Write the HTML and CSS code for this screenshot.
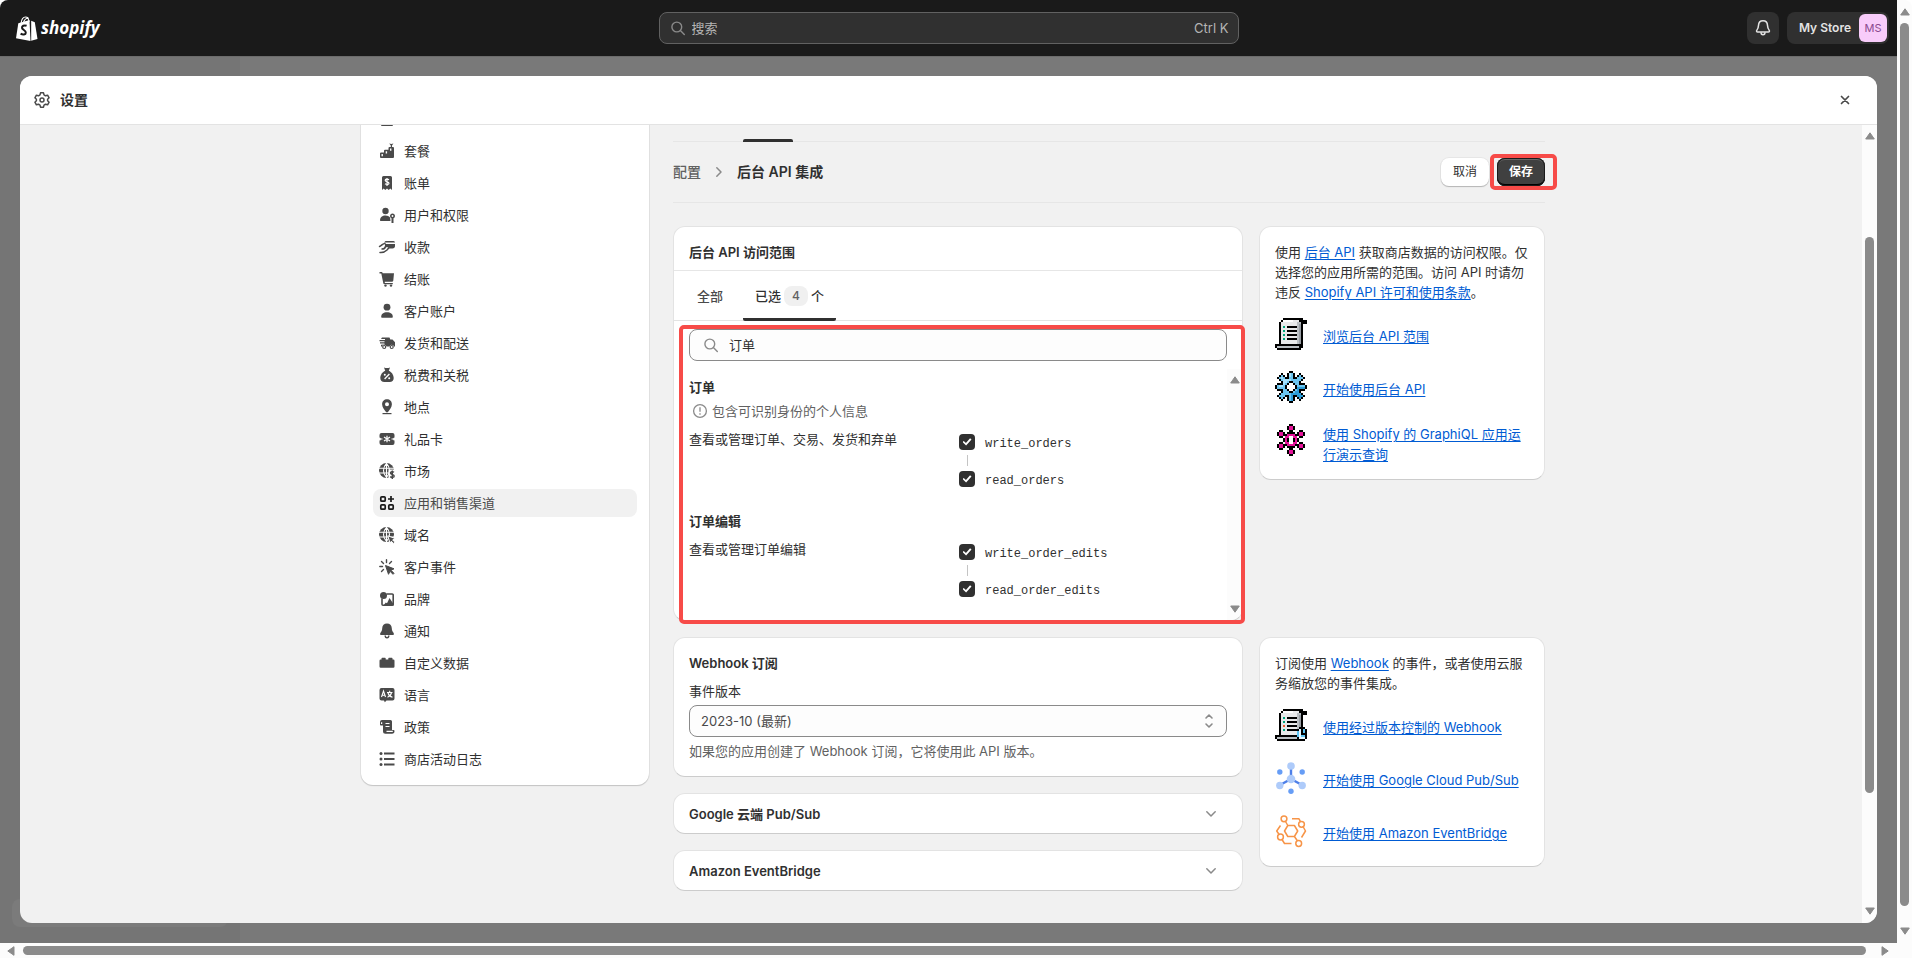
FILE: index.html
```html
<!DOCTYPE html>
<html lang="zh-CN">
<head>
<meta charset="utf-8">
<title>设置</title>
<link rel="stylesheet" href="styles.css">
</head>
<body>
<svg class="defs" aria-hidden="true">
  <symbol id="mag" viewBox="0 0 16 16"><path d="M11.7 7a4.9 4.9 0 1 1-9.8 0 4.9 4.9 0 0 1 9.8 0zM10.400 10.600l3.900 4" fill="none" stroke="currentColor" stroke-width="1.400" stroke-linecap="round"/></symbol>
  <symbol id="chev" viewBox="0 0 12 12"><path d="M1.800 3.800 6 8l4.200-4.200" fill="none" stroke="currentColor" stroke-width="1.500" stroke-linecap="round" stroke-linejoin="round"/></symbol>
  <symbol id="tri" viewBox="0 0 10 8"><path d="M5 .8 9.300 7H.7z" fill="#8b8b8b" stroke="#8b8b8b" stroke-linejoin="round"/></symbol>
  <symbol id="globe" viewBox="0 0 20 20"><circle cx="9.500" cy="9.500" r="7.500" fill="currentColor"/><path d="M2 7.300h15M2 12h15M9.500 2v15M9.500 2.400c-4 4-4 10 0 14M9.500 2.400c4 4 4 10 0 14" fill="none" stroke="#fff" stroke-width="1.100"/></symbol>
  <symbol id="scroll" viewBox="0 0 16 16">
    <path fill="#000" d="M4 0h10v1h2v2h-2v12h-1v1H1v-1H0v-2h2V2h1V1h1z"/>
    <path fill="#e8e9ea" d="M4 1h8v12H3V2h1z"/><path fill="#babfc3" d="M11 2h2v11h-2zM1 14h11v1H1z"/><path fill="#fff" d="M4 1h5v1H4z"/><path fill="#999ea4" d="M12 3h1v10h-1z"/>
    <path fill="#000" d="M6 4h5v1H6zM6 6h5v1H6zM6 8h5v1H6zM6 10h5v1H6z"/>
    <path fill="#00a57c" d="M4 4h1v1H4zM4 6h1v1H4zM4 8h1v1H4zM4 10h1v1H4z"/>
  </symbol>
</svg>

<div class="window">
  <div class="app">
    <header class="topbar">
      <a class="logo" href="#" aria-label="shopify">
        <svg width="22" height="25" viewBox="0 0 22 25"><path d="M2.300 7.200 13.500 4l1 21L0 22.300z" fill="#fff"/><path d="m15.200 4.800 3.600 1.500L21.500 23l-6.300 1.800z" fill="#fff"/><path d="M5 7.500C5.500 3.500 7.500 1 9.500 1c2.300 0 3.300 2 3.500 5M7.500 6.500C8.500 3 11 1.800 12.800 2.300" fill="none" stroke="#fff" stroke-width="1.200"/><path d="M10.600 9.800c-2.500-1-4.800.2-4.600 2 .2 2 4 2.500 3.800 4.800-.1 2.200-3 2.600-5.200 1.100" fill="none" stroke="#1a1a1a" stroke-width="2"/></svg>
        <span class="wordmark">shopify</span>
      </a>
      <div class="search">
        <svg width="16" height="16"><use href="#mag"/></svg>
        <input type="search" aria-label="搜索" placeholder="搜索">
        <kbd>Ctrl K</kbd>
      </div>
      <div class="account">
        <button class="bell" type="button" aria-label="通知">
          <svg width="20" height="20" viewBox="0 0 20 20" fill="none" stroke="#e3e3e3" stroke-width="1.500" stroke-linejoin="round"><path d="M10 2.800c-2.700 0-4.400 1.900-4.500 4.600-.1 2.300-.5 3.300-1.600 4.700-.7.900-.3 2 .8 2h10.600c1.100 0 1.500-1.100.8-2-1.100-1.400-1.500-2.400-1.600-4.700C14.400 4.700 12.700 2.800 10 2.800z"/><path d="M8 14.300c0 3.300 4 3.300 4 0"/></svg>
        </button>
        <button class="store" type="button"><span>My Store</span><span class="avatar">MS</span></button>
      </div>
    </header>

    <div class="backdrop">
      <span class="nav-item"></span>
      <div class="modal">
        <header class="modal-head">
          <svg width="20" height="20" viewBox="0 0 20 20" fill="none" stroke="#4a4a4a" stroke-width="1.500" stroke-linejoin="round"><path d="M8.500 2.800h3l.5 2.100 1.500.9 2.100-.6 1.500 2.600L15.600 9.200v1.600l1.500 1.400-1.500 2.600-2.100-.6-1.500.9-.5 2.100h-3L8 15.100l-1.500-.9-2.100.6-1.500-2.600 1.500-1.400V9.200L2.900 7.800l1.500-2.600 2.100.6L8 4.900z"/><circle cx="10" cy="10" r="2"/></svg>
          <h1>设置</h1>
          <button class="close" type="button" aria-label="关闭"><svg width="10" height="10" viewBox="0 0 10 10"><path d="m1.500 1.500 7 7m0-7-7 7" stroke="#4a4a4a" stroke-width="1.700" stroke-linecap="round"/></svg></button>
        </header>

        <div class="modal-body">
          <div class="page">
            <nav class="side">
              <a href="#" aria-label="商店详情"><svg viewBox="0 0 20 20"><path d="M4 9h12v7a1 1 0 0 1-1 1H5a1 1 0 0 1-1-1z"/></svg></a>
              <a href="#"><svg viewBox="0 0 20 20"><path d="M3 12.500a1 1 0 0 1 1-1h3V9.800a1 1 0 0 1 1-1h3.500V7a1 1 0 0 1 1-1H16a1 1 0 0 1 1 1v9a1 1 0 0 1-1 1H4a1 1 0 0 1-1-1z"/><path d="m12.200 2.500 2.100.5 2.100-.5-1.400 2v2h-1.200v-2z"/><path fill="#fff" d="M4.500 13h1.400v2.200H4.500zM8.700 10.300h1.400v2.200H8.700zM13 7.600h1.400v2.200H13z"/></svg>套餐</a>
              <a href="#"><svg viewBox="0 0 20 20"><path d="M5 4.500A1.500 1.500 0 0 1 6.500 3h7A1.500 1.500 0 0 1 15 4.500V17l-1.700-1.500L11.700 17 10 15.500 8.300 17l-1.600-1.500L5 17z"/><path d="M12 6.800c-1.500-1-3.800-.8-3.800.7 0 1.700 3.800.9 3.800 2.700 0 1.500-2.500 1.600-4 .6M10 5v8" fill="none" stroke="#fff" stroke-width="1.200"/></svg>账单</a>
              <a href="#"><svg viewBox="0 0 20 20"><circle cx="8.500" cy="6" r="3.200"/><path d="M3 15.500c0-3.200 2.300-5 5.500-5 2 0 3.600.7 4.600 2l.4 3.500H3.500z"/><path d="M15.500 8.500a2.500 2.500 0 0 1 1 4.800V18h-2v-4.700a2.500 2.500 0 0 1 1-4.800z"/><circle cx="15.500" cy="11" r=".9" fill="#fff"/></svg>用户和权限</a>
              <a href="#"><svg viewBox="0 0 20 20"><path d="M8.500 4h8a1.500 1.500 0 0 1 1.500 1.500H7zM8 7h10v2.500a2.500 2.500 0 0 1-2.500 2H12L13 9.500H8z"/><path d="M2.500 9.500C5 8.500 5.500 6.500 8 6.500M3 15.500c3.500.3 5-.5 7-2.500l3-3.500H8.500c-.5 2-2 2.600-3.500 2.600" fill="none" stroke="currentColor" stroke-width="1.500" stroke-linecap="round"/></svg>收款</a>
              <a href="#"><svg viewBox="0 0 20 20"><path d="M2.500 3h1.700c.8 0 1.400.5 1.500 1.200H17l-.7 7.300a1.400 1.400 0 0 1-1.400 1.200H7.800v1.200h8v1.300H7.500c-.8 0-1.400-.6-1.300-1.400L4.300 4.500H2.500z"/><circle cx="8.500" cy="16.600" r="1.200"/><circle cx="14" cy="16.600" r="1.200"/></svg>结账</a>
              <a href="#"><svg viewBox="0 0 20 20"><circle cx="10" cy="6.200" r="3.400"/><path d="M4.200 15.800c0-3 2.300-4.600 5.800-4.600s5.800 1.600 5.800 4.600c0 .7-.4 1-1 1H5.200c-.6 0-1-.3-1-1z"/></svg>客户账户</a>
              <a href="#"><svg viewBox="0 0 20 20"><path d="M5 4.500h7.500l.8 2h2.200L18 9.300v4.200h-1a2.300 2.300 0 0 0-4.500 0h-3a2.300 2.300 0 0 0-4.500 0H4v-1.700l3.500-.3v-1H3V9.300h4.500v-1h-5V7H8V6H4z"/><circle cx="7.200" cy="14" r="1.500" fill="#fff" stroke="currentColor" stroke-width="1.200"/><circle cx="14.700" cy="14" r="1.500" fill="#fff" stroke="currentColor" stroke-width="1.200"/></svg>发货和配送</a>
              <a href="#"><svg viewBox="0 0 20 20"><path d="M7 2.500 8.500 3h3l1.500-.5-1.200 3.200c2.700 1 4.900 4.200 4.900 7.300 0 2.700-1.700 4-4 4H7.300c-2.300 0-4-1.300-4-4 0-3.100 2.200-6.300 4.900-7.300z"/><path d="m7.600 14 4.800-5" stroke="#fff" stroke-width="1.300"/><circle cx="7.800" cy="9.800" r="1" fill="#fff"/><circle cx="12.200" cy="13.200" r="1" fill="#fff"/></svg>税费和关税</a>
              <a href="#"><svg viewBox="0 0 20 20"><path fill-rule="evenodd" d="M10 2.300c2.800 0 4.900 2.100 4.900 4.900 0 3-2.500 5.500-3.700 7.500-.6.900-1.800.9-2.400 0-1.200-2-3.700-4.500-3.700-7.500 0-2.800 2.100-4.900 4.900-4.900zm0 3a2 2 0 1 0 0 4 2 2 0 0 0 0-4z"/><path d="M5.500 16h9v1.200h-9z"/></svg>地点</a>
              <a href="#"><svg viewBox="0 0 20 20"><path d="M4.500 4h11a2 2 0 0 1 2 2v2.500a1.500 1.500 0 0 0 0 3V14a2 2 0 0 1-2 2h-11a2 2 0 0 1-2-2v-2.500a1.500 1.500 0 0 0 0-3V6a2 2 0 0 1 2-2z"/><path d="M10 6.800v6.400M7 8l6 4M13 8l-6 4M3.500 10h2M14.500 10h2" stroke="#fff" stroke-width="1.200"/></svg>礼品卡</a>
              <a href="#"><svg viewBox="0 0 20 20"><use href="#globe"/><path fill="#fff" d="M11.500 8.500H19V19h-7.500z"/><path d="M17 11.300c-1.300-1-3.600-.7-3.600.8 0 1.800 3.800 1 3.800 2.900 0 1.600-2.600 1.700-4 .6M15.300 9.500v8.500" fill="none" stroke="currentColor" stroke-width="1.400"/></svg>市场</a>
              <a class="on" href="#" aria-current="page"><svg viewBox="0 0 20 20" fill="none" stroke="#1a1a1a" stroke-width="1.700"><rect x="3.800" y="3.800" width="4.400" height="4.400" rx="1"/><rect x="3.800" y="11.800" width="4.400" height="4.400" rx="1"/><rect x="11.800" y="11.800" width="4.400" height="4.400" rx="1"/><path d="M14 3v6M11 6h6"/></svg>应用和销售渠道</a>
              <a href="#"><svg viewBox="0 0 20 20"><use href="#globe"/><path d="m10.800 10.800 7.400 2.700-2.600 1.400 2.200 2.200-1.300 1.300-2.200-2.200-1.200 2.100z" stroke="#fff" stroke-width="1"/></svg>域名</a>
              <a href="#"><svg viewBox="0 0 20 20"><path d="m8.500 8.500 8.500 3.300-3 1.500 3 3-1 1-3-3-1.500 3z" stroke="currentColor" stroke-linejoin="round"/><path d="M9.500 2.800v2.700M4.500 4.500l2 2M14.500 4.500l-2 2M2.800 9.500h2.700M4.500 14.500l2-2" fill="none" stroke="currentColor" stroke-width="1.400" stroke-linecap="round"/></svg>客户事件</a>
              <a href="#"><svg viewBox="0 0 20 20"><circle cx="6.500" cy="6.500" r="3.500"/><path d="M9.500 5h5.700a1 1 0 0 1 1 1v9.200a1 1 0 0 1-1 1H6a1 1 0 0 1-1-1V9.500" fill="none" stroke="currentColor" stroke-width="1.600"/><path d="m6.500 16.500 2.300-3 1.200.8L12.500 9l4.300 6.500v1z"/></svg>品牌</a>
              <a href="#"><svg viewBox="0 0 20 20"><path d="M10 2.500c-2.900 0-4.700 1.900-4.800 4.700-.1 2.200-.6 3-1.700 4.500-.9 1.200-.3 2.400 1 2.400h11c1.300 0 1.900-1.200 1-2.400-1.100-1.500-1.600-2.300-1.700-4.500-.1-2.800-1.900-4.700-4.800-4.700z"/><path d="M8.200 14.500c0 3 3.600 3 3.600 0" fill="none" stroke="currentColor" stroke-width="1.400"/></svg>通知</a>
              <a href="#"><svg viewBox="0 0 20 20"><path d="M4.500 6.500v-1a.7.7 0 0 1 .7-.7H8a.7.7 0 0 1 .7.7v1h2.600v-1a.7.7 0 0 1 .7-.7h2.800a.7.7 0 0 1 .7.700v1h.8a1.200 1.200 0 0 1 1.200 1.200v5.800a1.200 1.200 0 0 1-1.200 1.200H3.700a1.200 1.200 0 0 1-1.200-1.200V7.700a1.200 1.200 0 0 1 1.200-1.200z"/></svg>自定义数据</a>
              <a href="#"><svg viewBox="0 0 20 20"><path d="M4.500 3h11a2 2 0 0 1 2 2v8.500a2 2 0 0 1-2 2H9.500L7.800 17.300 7 15.500H4.500a2 2 0 0 1-2-2V5a2 2 0 0 1 2-2z"/><path d="m4.500 12 2-6 2 6M5.200 10.200h2.600M10 7.500h5.500M12.700 5.800v1.700M10.500 12.200c2.500-1 3.700-2.500 4-4.500M11 8c.5 2 2 3.500 4.500 4.200" fill="none" stroke="#fff" stroke-width="1.100"/></svg>语言</a>
              <a href="#"><svg viewBox="0 0 20 20"><path d="M5 3h8.500A1.500 1.500 0 0 1 15 4.500V13h1.500a1 1 0 0 1 1 1c0 1.700-.8 2.800-2.500 2.800H8.500A2.500 2.500 0 0 1 6 14.300V8.500H3.800a.8.800 0 0 1-.8-.8V5a2 2 0 0 1 2-2z"/><path d="M4.600 7V5.200M8.500 6.500h4M8.500 9.500h4M9.500 14.400h6.300" fill="none" stroke="#fff" stroke-width="1.200"/></svg>政策</a>
              <a href="#"><svg viewBox="0 0 20 20"><circle cx="4" cy="4.500" r="1.500"/><circle cx="4" cy="10" r="1.500"/><circle cx="4" cy="15.500" r="1.500"/><path d="M7 4.500h10.500M7 10h10.500M7 15.500h10.500" stroke="currentColor" stroke-width="1.800"/></svg>商店活动日志</a>
            </nav>

            <main class="content">
              <div class="strip"><span></span></div>
              <div class="crumbs">
                <a href="#">配置</a>
                <svg class="crumb-sep" width="12" height="12"><use href="#chev"/></svg>
                <h2>后台 API 集成</h2>
                <div class="actions">
                  <button class="btn" type="button">取消</button>
                  <span class="marked-save"><button class="btn primary" type="button">保存</button></span>
                </div>
              </div>

              <section class="section">
                <div class="card">
                  <h3 class="card-title">后台 API 访问范围</h3>
                  <div class="tabs" role="tablist">
                    <button type="button" role="tab">全部</button>
                    <button class="active" type="button" role="tab" aria-selected="true">已选<span class="badge">4</span>个</button>
                  </div>
                  <div class="scopes">
                    <div class="field">
                      <svg width="16" height="16"><use href="#mag"/></svg>
                      <input type="text" aria-label="搜索访问范围" value="订单">
                    </div>
                    <div class="scope-list">
                      <div class="scope-items">
                        <h4>订单</h4>
                        <p class="pii"><svg width="16" height="16" viewBox="0 0 16 16" fill="none" stroke="#8a8a8a" stroke-width="1.300"><circle cx="8" cy="8" r="6.400"/><path d="M8 4.200v4.600M8 10.300v1.500"/></svg>包含可识别身份的个人信息</p>
                        <div class="scope">
                          <p>查看或管理订单、交易、发货和弃单</p>
                          <div class="checks">
                            <label><input type="checkbox" checked><code>write_orders</code></label>
                            <i></i>
                            <label><input type="checkbox" checked><code>read_orders</code></label>
                          </div>
                        </div>
                        <h4 class="next">订单编辑</h4>
                        <div class="scope">
                          <p>查看或管理订单编辑</p>
                          <div class="checks">
                            <label><input type="checkbox" checked><code>write_order_edits</code></label>
                            <i></i>
                            <label><input type="checkbox" checked><code>read_order_edits</code></label>
                          </div>
                        </div>
                      </div>
                      <div class="bar inner" aria-hidden="true"><svg width="10" height="8"><use href="#tri"/></svg><svg class="down" width="10" height="8"><use href="#tri"/></svg></div>
                    </div>
                  </div>
                </div>

                <aside class="card help">
                  <p>使用 <a href="#">后台 API</a> 获取商店数据的访问权限。仅选择您的应用所需的范围。访问 API 时请勿违反 <a href="#">Shopify API 许可和使用条款</a>。</p>
                  <ul>
                    <li><svg class="pixel"><use href="#scroll"/></svg><a href="#">浏览后台 API 范围</a></li>
                    <li><svg class="pixel" viewBox="0 0 16 16">
                      <path stroke="#000" d="M7 .5h2M3 1.500h1M6 1.500h4M12 1.500h1M2 2.500h3M6 2.500h4M11 2.500h3M1 3.500h14M2 4.500h12M3 5.500h10M1 6.500h14M0 7.500h16M0 8.500h16M1 9.500h14M3 10.500h10M2 11.500h12M1 12.500h14M2 13.500h3M6 13.500h4M11 13.500h3M3 14.500h1M6 14.500h4M12 14.500h1M7 15.500h2"/>
                      <path stroke="#6cc5f0" d="M7 1.500h2M3 2.500h1M7 2.500h2M12 2.500h1M2 3.500h3M7 3.500h2M11 3.500h3M3 4.500h10M4 5.500h8M4 6.500h8M1 7.500h14M1 8.500h14M4 9.500h8M4 10.500h8M3 11.500h10M2 12.500h3M7 12.500h2M11 12.500h3M3 13.500h1M7 13.500h2M12 13.500h1M7 14.500h2"/>
                      <path stroke="#2c9cd8" d="M11 8.500h4M11 9.500h1M10 10.500h2M8 11.500h5M8 12.500h1M11 12.500h3M8 13.500h1M12 13.500h1M8 14.500h1"/><path stroke="#a5e0fa" d="M7 1.500h1M7 2.500h1M3 3.500h1M4 4.500h4M4 5.500h2M4 6.500h1M2 7.500h2"/>
                      <path fill="#000" d="M7 5h2v1h1v1h1v2h-1v1H9v1H7v-1H6V9H5V7h1V6h1z"/><path fill="#fff" d="M7 6h2v1h1v2H9v1H7V9H6V7h1z"/>
                    </svg><a href="#">开始使用后台 API</a></li>
                    <li><svg class="pixel" viewBox="0 0 16 16">
                      <path stroke="#000" d="M7 .5h2M6 1.500h4M6 2.500h4M2 3.500h2M7 3.500h2M12 3.500h2M1 4.500h4M6 4.500h4M11 4.500h4M1 5.500h14M2 6.500h2M5 6.500h6M12 6.500h2M4 7.500h8M4 8.500h8M2 9.500h2M5 9.500h6M12 9.500h2M1 10.500h14M1 11.500h4M6 11.500h4M11 11.500h4M2 12.500h2M7 12.500h2M12 12.500h2M6 13.500h4M6 14.500h4M7 15.500h2"/>
                      <path stroke="#e6149b" d="M7 1.500h2M7 2.500h2M2 4.500h2M12 4.500h2M2 5.500h2M6 5.500h4M12 5.500h2M5 6.500h2M9 6.500h2M5 7.500h1M10 7.500h1M5 8.500h1M10 8.500h1M5 9.500h2M9 9.500h2M2 10.500h2M6 10.500h4M12 10.500h2M2 11.500h2M12 11.500h2M7 13.500h2M7 14.500h2"/>
                      <path fill="#fff" d="M7 6h2v4H7z"/>
                    </svg><a href="#">使用 Shopify 的 GraphiQL 应用运行演示查询</a></li>
                  </ul>
                </aside>
              </section>

              <section class="section">
                <div class="stack">
                  <div class="card webhook">
                    <h3>Webhook 订阅</h3>
                    <label for="version">事件版本</label>
                    <div class="select">
                      <select id="version"><option>2023-10 (最新)</option></select>
                      <svg width="10" height="16" viewBox="0 0 10 16" fill="none" stroke="#8a8a8a" stroke-width="1.600" stroke-linecap="round" stroke-linejoin="round"><path d="M2 5l3-3 3 3M2 11l3 3 3-3"/></svg>
                    </div>
                    <p class="hint">如果您的应用创建了 Webhook 订阅，它将使用此 API 版本。</p>
                  </div>
                  <button class="card fold" type="button">Google 云端 Pub/Sub<svg width="12" height="12"><use href="#chev"/></svg></button>
                  <button class="card fold" type="button">Amazon EventBridge<svg width="12" height="12"><use href="#chev"/></svg></button>
                </div>

                <aside class="card help">
                  <p>订阅使用 <a href="#">Webhook</a> 的事件，或者使用云服务缩放您的事件集成。</p>
                  <ul>
                    <li><svg class="pixel" viewBox="0 0 16 16"><use href="#scroll"/><path fill="#f0592a" d="M4 8h1v1H4z"/><path fill="#000" d="M12 9h3v1h1v5h-1v1h-3v-1h-1v-5h1z"/><path fill="#5cc3f2" d="M12 10h3v5h-3zM11 11h4v3h-4z"/><path fill="#e4f6ff" d="M12 10h1v4h2v1h-3z"/><path fill="#000" d="M13 10h1v2h1v1h-2z"/></svg><a href="#">使用经过版本控制的 Webhook</a></li>
                    <li><svg class="art" viewBox="0 0 32 32"><path d="M16 4v13M16 17 5 23M16 17l11 6" stroke="#4d7fe8" stroke-width="2.400"/><g fill="#aecbfa"><circle cx="16" cy="4" r="3.800"/><circle cx="16" cy="17" r="4.300"/><circle cx="4.800" cy="23.500" r="3.700"/><circle cx="27.200" cy="23.500" r="3.700"/></g><g fill="#669df6"><circle cx="4.800" cy="10" r="2.700"/><circle cx="27.200" cy="10" r="2.700"/><circle cx="16" cy="29.300" r="2.700"/></g></svg><a href="#">开始使用 Google Cloud Pub/Sub</a></li>
                    <li><svg class="art" viewBox="0 0 32 32" fill="none" stroke="#f79447" stroke-width="1.500" stroke-linejoin="round"><path d="M12.800 10.500h6.600l3.300 5.500-3.300 5.500h-6.600L9.500 16zM17 3.800h7l1.600 3M28 11.500 30.500 16 26.500 22.500M5.500 10.500 1.700 16l2.800 4M7 24.500 9.500 28.500h7M10.500 6.500l2.300 4M19.400 21.500l2.800 4"/><circle cx="9" cy="3.800" r="2.900"/><circle cx="26.500" cy="9.300" r="2.900"/><circle cx="5.500" cy="22" r="2.900"/><circle cx="23.700" cy="28.500" r="2.900"/></svg><a href="#">开始使用 Amazon EventBridge</a></li>
                  </ul>
                </aside>
              </section>
            </main>
          </div>
          <div class="bar modal-bar" aria-hidden="true"><svg width="10" height="8"><use href="#tri"/></svg><span class="thumb"></span><svg class="down" width="10" height="8"><use href="#tri"/></svg></div>
        </div>
      </div>
    </div>
  </div>
  <div class="bar outer" aria-hidden="true"><svg width="10" height="8"><use href="#tri"/></svg><span class="thumb"></span><svg class="down" width="10" height="8"><use href="#tri"/></svg></div>
  <div class="bar across" aria-hidden="true"><svg class="left" width="10" height="8"><use href="#tri"/></svg><span class="thumb"></span><svg class="right" width="10" height="8"><use href="#tri"/></svg></div>
</div>
</body>
</html>
```
FILE: styles.css
```css
* { box-sizing: border-box; }

body, h1, h2, h3, h4, p, ul { margin: 0; padding: 0; }

body {
  font: 13px/20px Inter, "Noto Sans CJK SC", sans-serif;
  color: #303030;
  background: #fff;
}

button, input, select { font: inherit; color: inherit; }
button { border: 0; background: none; padding: 0; }
h1, h2, h3, h4 { font-size: 13px; line-height: 20px; font-weight: 600; }
svg { display: block; flex: none; }
.defs { display: none; }

.window {
  display: grid;
  grid-template: minmax(0, 1fr) 15px / minmax(0, 1fr) 15px;
  height: 100vh;
  overflow: hidden;
}

.app { display: flex; flex-direction: column; min-height: 0; }

/* Top bar */
.topbar {
  display: grid;
  grid-template-columns: 1fr 580px 1fr;
  align-items: center;
  height: 56px;
  padding: 0 8px;
  background: #1a1a1a;
  border-top-left-radius: 8px;
  flex: none;
}

.logo { display: flex; align-items: center; gap: 3px; padding-left: 8px; color: #fff; text-decoration: none; }
.wordmark { font: italic 700 17px/24px "Open Sans", sans-serif; }

.search {
  display: flex;
  align-items: center;
  gap: 6px;
  height: 32px;
  padding: 0 9px 0 10px;
  border: 1px solid #616161;
  border-radius: 8px;
  background: #303030;
  color: #b5b5b5;
}
.search svg { color: #8a8a8a; }
.search input { flex: 1; min-width: 0; padding: 0; border: 0; outline: 0; background: none; }
.search input::placeholder { color: #b5b5b5; opacity: 1; }
.search kbd { font: inherit; }

.account { display: flex; justify-content: flex-end; gap: 8px; }
.bell { display: grid; place-items: center; width: 32px; height: 32px; border-radius: 8px; background: #303030; }
.store {
  display: flex;
  align-items: center;
  gap: 8px;
  height: 32px;
  padding: 0 2px 0 12px;
  border-radius: 8px;
  background: #303030;
  color: #e3e3e3;
  font-size: 12px;
  font-weight: 600;
}
.avatar {
  width: 28px;
  line-height: 28px;
  border-radius: 6px;
  background: #f8ccfa;
  color: #8a4a8f;
  font-size: 11px;
  font-weight: 400;
  text-align: center;
}

/* Dimmed page with the settings dialog */
.backdrop {
  position: relative;
  flex: 1;
  min-height: 0;
  padding: 19px 20px 20px;
  border-top: 1px solid #6c6c6c;
  background: linear-gradient(90deg, #757575 240px, #797979 240px);
}
.nav-item {
  position: absolute;
  left: 12px;
  bottom: 16px;
  width: 216px;
  height: 28px;
  border-radius: 8px;
  background: #7b7b7b;
}
.modal {
  position: relative;
  display: flex;
  flex-direction: column;
  height: 100%;
  border-radius: 12px;
  overflow: hidden;
  background: #f1f1f1;
}
.modal-head {
  display: flex;
  align-items: center;
  gap: 8px;
  height: 49px;
  padding: 0 22px 0 12px;
  border-bottom: 1px solid #e3e3e3;
  background: #fff;
  flex: none;
}
.modal-head h1 { font-size: 14px; }
.close { display: grid; place-items: center; width: 20px; height: 20px; margin-left: auto; }
.modal-body { display: flex; flex: 1; min-height: 0; overflow: hidden; }

.page {
  display: grid;
  grid-template-columns: 288px minmax(0, 872px);
  gap: 24px;
  justify-content: center;
  align-items: start;
  flex: 1;
  padding-left: 24px;
}

/* Settings navigation, scrolled by part of a row */
.side {
  display: flex;
  flex-direction: column;
  gap: 4px;
  margin-top: -20px;
  padding: 0 12px 12px;
  border-bottom-left-radius: 12px;
  border-bottom-right-radius: 12px;
  background: #fff;
  box-shadow: 0 1px 1px #c4c4c4, 0 0 0 1px #e4e4e4;
}
.side a {
  display: flex;
  align-items: center;
  gap: 7px;
  height: 28px;
  padding: 0 4px;
  border-radius: 8px;
  color: #303030;
  text-decoration: none;
}
.side svg { width: 20px; height: 20px; color: #4a4a4a; fill: #4a4a4a; }
.side svg[fill="none"] { fill: none; }
.side .on { background: #f1f1f1; color: #4a4a4a; }

/* Content */
.strip { height: 17px; padding: 14px 70px 0; border-bottom: 1px solid #e6e6e6; }
.strip span { display: block; width: 50px; height: 3px; border-radius: 2px 2px 0 0; background: #303030; }

.crumbs {
  display: flex;
  align-items: center;
  height: 61px;
  border-bottom: 1px solid #e6e6e6;
  font-size: 14px;
}
.crumbs a { color: #616161; text-decoration: none; font-weight: 500; }
.crumbs h2 { font-size: 14px; }
.crumb-sep { margin: 0 12px; color: #8a8a8a; transform: rotate(-90deg); }
.actions { display: flex; gap: 8px; margin-left: auto; }
.btn {
  display: block;
  height: 28px;
  padding: 0 12px;
  border-radius: 8px;
  background: #fff;
  box-shadow: 0 1px 1px #b5b5b5, 0 0 0 1px #e6e6e6;
  font-size: 12px;
}
.primary {
  background: #404040;
  color: #fff;
  font-weight: 600;
  box-shadow: inset 0 0 0 1px #1a1a1a, inset 0 -2px 0 #000, inset 0 2px 0 #666;
}
.marked-save { position: relative; }
.marked-save::after, .scopes::after {
  content: "";
  position: absolute;
  border: 4px solid #f74b48;
  border-radius: 5px;
  pointer-events: none;
}
.marked-save::after { inset: -4px -12px -4px -7px; }

.section {
  display: grid;
  grid-template-columns: minmax(0, 570fr) minmax(0, 286fr);
  gap: 16px;
  align-items: start;
  margin-top: 16px;
}
.crumbs + .section { margin-top: 23px; }
.stack { display: grid; gap: 16px; }

.card {
  border: 1px solid #e3e3e3;
  border-bottom-color: #ccc;
  border-radius: 12px;
  background: #fff;
}

.card-title { padding: 15px 15px 8px; border-bottom: 1px solid #e6e6e6; }
.tabs { display: flex; gap: 8px; height: 50px; padding: 0 11px; border-bottom: 1px solid #e3e3e3; }
.tabs button { display: flex; align-items: center; height: 50px; padding: 3px 12px 0; border-bottom: 3px solid transparent; border-radius: 2px; font-weight: 500; color: #4a4a4a; }
.tabs .active { border-bottom-color: #303030; color: #303030; }
.badge { margin: 0 3px; padding: 0 8px; border-radius: 8px; background: #f0f0f0; color: #616161; font-size: 12px; }

.scopes { position: relative; padding-top: 8px; }
.scopes::after { inset: 4px -3px -4px 5px; }
.field {
  display: flex;
  align-items: center;
  gap: 10px;
  height: 32px;
  margin: 0 15px 8px;
  padding: 0 12px 0 13px;
  border: 1px solid #8a8a8a;
  border-radius: 8px;
  background: #fdfdfd;
  color: #8a8a8a;
}
.field input { flex: 1; min-width: 0; padding: 0; border: 0; outline: 0; background: none; color: #303030; }
.scope-list { display: flex; }
.scope-items { flex: 1; padding: 8px 0 18px 15px; }
.pii { display: flex; align-items: center; gap: 4px; margin: 4px 0 8px; padding-left: 3px; color: #616161; }
.scope { display: grid; grid-template-columns: 1fr 1fr; column-gap: 2px; }
.checks { display: flex; flex-direction: column; }
.checks label { display: flex; align-items: center; gap: 10px; height: 26px; }
.checks code { padding-top: 4px; font: 12px/20px "Liberation Mono", monospace; }
.checks i { height: 11px; margin-left: 8px; border-left: 1px solid #c4c4c4; }
.checks input {
  display: grid;
  place-items: center;
  width: 16px;
  height: 16px;
  margin: 0;
  border-radius: 4px;
  background: #303030;
  appearance: none;
}
.checks input:checked::before {
  content: "";
  width: 9px;
  height: 8px;
  background: #fff;
  clip-path: polygon(0 50%, 14% 36%, 38% 62%, 84% 4%, 100% 18%, 40% 94%);
}
.scope-items .next { margin: 19px 0 8px; }

.webhook { padding: 15px; }
.webhook label { display: block; margin: 8px 0 4px; }
.select { display: grid; align-items: center; }
.select select, .select svg { grid-area: 1 / 1; }
.select svg { justify-self: end; margin-right: 13px; pointer-events: none; }
.select select { width: 100%; height: 32px; padding: 0 11px; border: 1px solid #8a8a8a; border-radius: 8px; background: #fdfdfd; color: #4a4a4a; appearance: none; }
.hint { margin-top: 4px; color: #616161; }

.fold { display: flex; align-items: center; justify-content: space-between; width: 100%; min-height: 41px; padding: 0 25px 0 15px; font-weight: 600; }
.fold svg { color: #8a8a8a; }

.help { padding: 15px; }
.help a { color: #005bd3; text-underline-offset: 2px; }
.help ul { display: grid; gap: 17px; margin-top: 16px; list-style: none; }
.help li { display: flex; align-items: center; gap: 16px; min-height: 36px; }
.help li svg { width: 32px; height: 32px; align-self: flex-start; overflow: visible; }
.pixel { shape-rendering: crispEdges; }

/* Scroll bars */
.bar { display: flex; flex-direction: column; align-items: center; width: 15px; flex: none; background: #fcfcfc; }
.bar .thumb { width: 9px; border-radius: 5px; background: #8b8b8b; }
.down { transform: rotate(180deg); }
.inner { justify-content: space-between; padding: 7px 0; border-bottom-right-radius: 12px; }
.modal-bar { padding: 7px 0 8px; }
.modal-bar .thumb { height: 71%; margin: 97px 0 auto; }
.outer { padding: 8px 0; border-top-right-radius: 8px; }
.outer .thumb { flex: 1; margin: 7px 0 21px; }
.across { flex-direction: row; grid-column: 1 / -1; width: auto; height: 15px; padding: 0 22px 0 6px; }
.across .thumb { flex: 1; width: auto; height: 9px; margin: 0 14px 0 7px; }
.left { transform: rotate(-90deg); }
.right { transform: rotate(90deg); }
```
